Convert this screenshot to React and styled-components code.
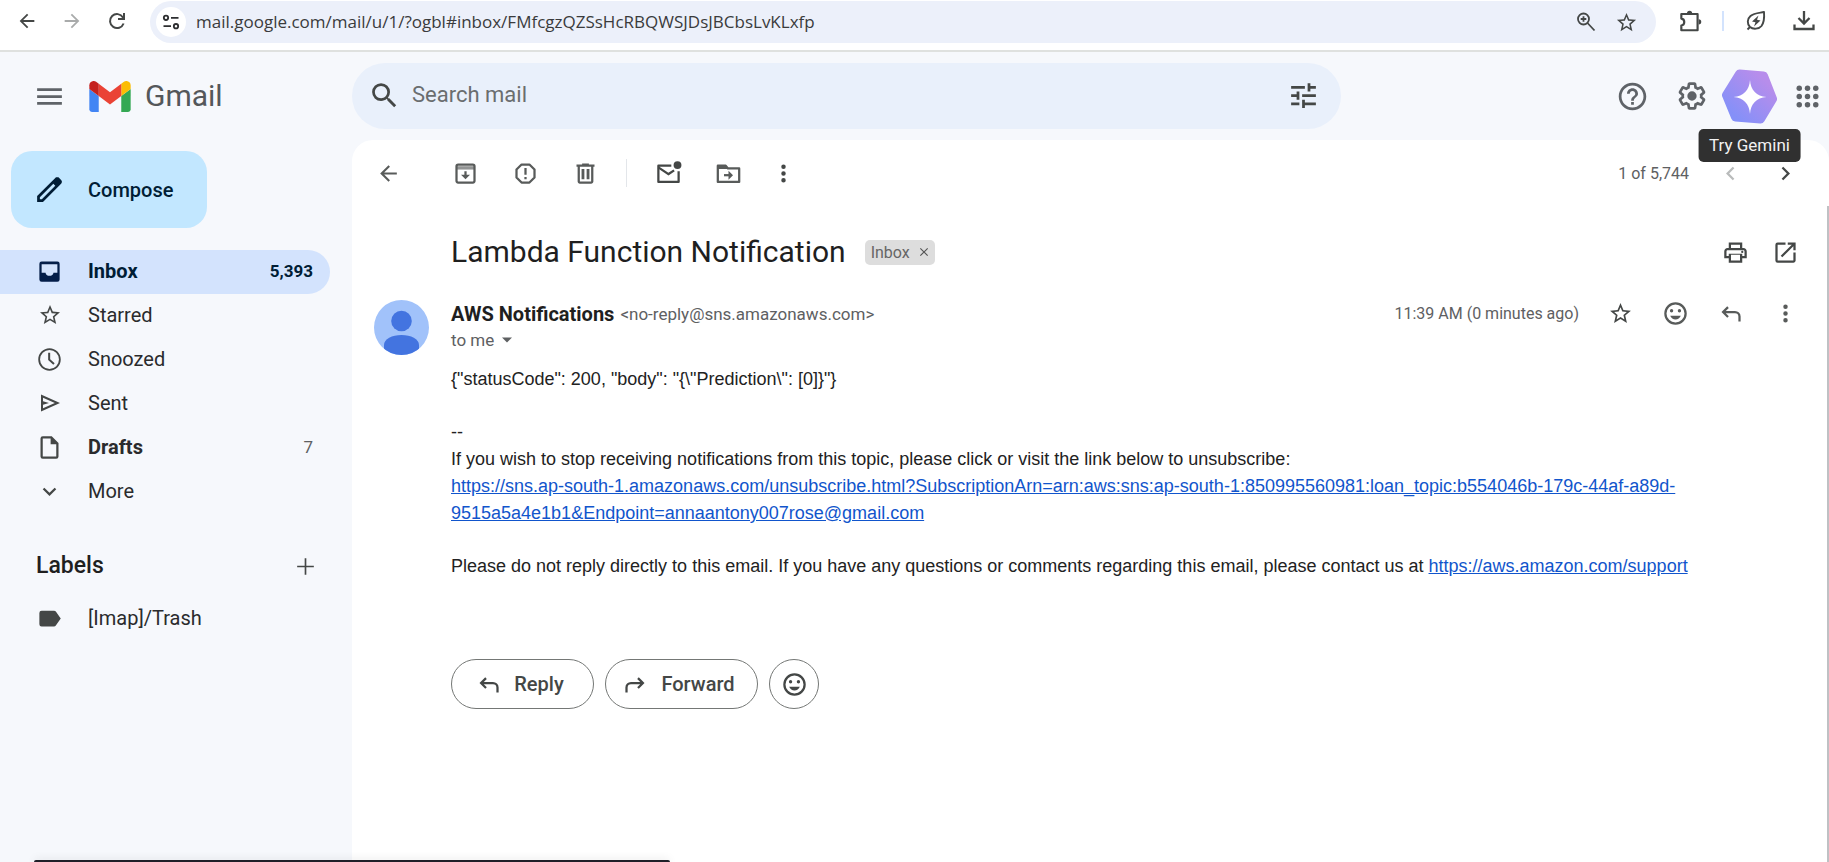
import React from "react";
import styled, { createGlobalStyle } from "styled-components";

const sans = `Roboto, "Liberation Sans", sans-serif`;
const ink = "#444746";
const softInk = "#585b5a";

const GlobalStyle = createGlobalStyle`
  *, *::before, *::after { box-sizing: border-box; }
  html, body, #root { height: 100%; }
  body { margin: 0; background: #f6f8fc; font-family: ${sans}; color: #1f1f1f; }
  button, input { font: inherit; color: inherit; }
  h1, h2, p { margin: 0; font-weight: 400; }
`;

const ICONS = {
  back: "M20 11H7.83l5.59-5.59L12 4l-8 8 8 8 1.41-1.41L7.83 13H20v-2z",
  forwardNav: "M12 4l-1.41 1.41L16.17 11H4v2h12.17l-5.58 5.59L12 20l8-8z",
  menu: "M3 18h18v-2H3v2zm0-5h18v-2H3v2zm0-7v2h18V6H3z",
  search:
    "M15.5 14h-.79l-.28-.27A6.471 6.471 0 0 0 16 9.5 6.5 6.5 0 1 0 9.5 16c1.61 0 3.09-.59 4.23-1.57l.27.28v.79l5 4.99L20.49 19l-4.99-5zm-6 0C7.01 14 5 11.99 5 9.5S7.01 5 9.5 5 14 7.01 14 9.5 11.99 14 9.5 14z",
  tune: "M3 17v2h6v-2H3zM3 5v2h10V5H3zm10 16v-2h8v-2h-8v-2h-2v6h2zM7 9v2H3v2h4v2h2V9H7zm14 4v-2H11v2h10zm-6-4h2V7h4V5h-4V3h-2v6z",
  help: "M11 18h2v-2h-2v2zm1-16C6.48 2 2 6.48 2 12s4.48 10 10 10 10-4.48 10-10S17.52 2 12 2zm0 18c-4.41 0-8-3.59-8-8s3.59-8 8-8 8 3.59 8 8-3.59 8-8 8zm0-14c-2.21 0-4 1.79-4 4h2c0-1.1.9-2 2-2s2 .9 2 2c0 2-3 1.75-3 5h2c0-2.25 3-2.5 3-5 0-2.21-1.79-4-4-4z",
  gear: "M13.85 22.25h-3.7c-.74 0-1.36-.54-1.45-1.27l-.27-1.89c-.27-.14-.53-.29-.79-.46l-1.8.72c-.7.26-1.47-.03-1.81-.65L2.2 15.53c-.35-.66-.2-1.44.36-1.88l1.53-1.19c-.01-.15-.02-.3-.02-.46 0-.15.01-.31.02-.46l-1.52-1.19c-.59-.45-.74-1.26-.37-1.88l1.85-3.19c.34-.62 1.11-.9 1.79-.63l1.81.73c.26-.17.52-.32.78-.46l.27-1.91c.09-.7.71-1.25 1.44-1.25h3.7c.74 0 1.36.54 1.45 1.27l.27 1.89c.27.14.53.29.79.46l1.8-.72c.71-.26 1.48.03 1.82.65l1.84 3.18c.36.66.2 1.44-.36 1.88l-1.52 1.19c.01.15.02.3.02.46s-.01.31-.02.46l1.52 1.19c.56.45.72 1.23.37 1.86l-1.86 3.22c-.34.62-1.11.9-1.8.63l-1.8-.72c-.26.17-.52.32-.78.46l-.27 1.91c-.1.68-.72 1.22-1.46 1.22zm-3.23-2h2.76l.37-2.55.53-.22c.44-.18.88-.44 1.34-.78l.45-.34 2.38.96 1.38-2.4-2.03-1.58.07-.56c.03-.26.06-.51.06-.78s-.03-.53-.06-.78l-.07-.56 2.03-1.58-1.39-2.4-2.39.96-.45-.35c-.42-.32-.87-.58-1.33-.77l-.52-.22-.37-2.55h-2.76l-.37 2.55-.53.21c-.44.19-.88.44-1.34.79l-.45.33-2.38-.95-1.39 2.39 2.03 1.58-.07.56a7 7 0 0 0-.06.79c0 .26.02.53.06.78l.07.56-2.03 1.58 1.38 2.4 2.39-.96.45.35c.43.33.86.58 1.33.77l.53.22.38 2.55zM12 8.5a3.5 3.5 0 1 0 0 7 3.5 3.5 0 0 0 0-7z",
  pencil:
    "M5 19h1.43L16.2 9.23 14.78 7.8 5 17.58V19zm-2 2v-4.25L16.2 3.58c.2-.18.42-.33.66-.43.24-.1.5-.15.77-.15.26 0 .52.05.77.15.25.1.47.25.65.45L20.43 5c.2.18.34.4.43.65.1.25.14.5.14.75 0 .27-.05.52-.14.76-.09.25-.23.47-.43.67L7.25 21H3z",
  inbox:
    "M19 3H5a2 2 0 0 0-2 2v14a2 2 0 0 0 2 2h14a2 2 0 0 0 2-2V5a2 2 0 0 0-2-2zm0 10h-3.5c0 1.5-1.6 2.8-3.5 2.8S8.500 14.500 8.500 13H5V5.500h14z",
  star: "M22 9.24l-7.19-.62L12 2 9.19 8.63 2 9.24l5.46 4.73L5.82 21 12 17.27 18.18 21l-1.63-7.03L22 9.24zM12 15.4l-3.76 2.27 1-4.28-3.32-2.88 4.38-.38L12 6.1l1.71 4.04 4.38.38-3.32 2.88 1 4.28L12 15.4z",
  clock:
    "M11.99 2C6.47 2 2 6.48 2 12s4.47 10 9.99 10C17.52 22 22 17.52 22 12S17.52 2 11.99 2zM12 20.400a8.400 8.400 0 1 1 0-16.800 8.400 8.400 0 0 1 0 16.800zM12.600 6h-1.800v6.500l4.600 4.200 1.200-1.400-4-3.600z",
  send: "M3 20.500V3.500L22 12 3 20.500zm2-3.200L16.850 12 5 6.700v3.600l6 1.700-6 1.700v3.600z",
  file: "M14 2H6a2 2 0 0 0-2 2v16a2 2 0 0 0 2 2h12a2 2 0 0 0 2-2V8l-6-6zM6 20V4h7v5h5v11H6z",
  expand: "M16.590 8.590 12 13.170 7.410 8.590 6 10l6 6 6-6z",
  plus: "M20 12.800h-7.200V20h-1.600v-7.200H4v-1.600h7.200V4h1.600v7.200H20z",
  tag: "M17.630 5.840C17.270 5.330 16.670 5 16 5H5a2 2 0 0 0-2 2v10a2 2 0 0 0 2 2h11c.67 0 1.270-.33 1.630-.84L22 12l-4.370-6.160z",
  trash:
    "M15 4V3H9v1H4v2h1v13c0 1.100.9 2 2 2h10c1.100 0 2-.9 2-2V6h1V4h-5zm2 15H7V6h10v13zM8.500 8h2.500v9H8.500zM13 8h2.500v9H13z",
  more: "M12 8a2 2 0 1 0 0-4 2 2 0 0 0 0 4zm0 2a2 2 0 1 0 0 4 2 2 0 0 0 0-4zm0 6a2 2 0 1 0 0 4 2 2 0 0 0 0-4z",
  left: "M15.410 7.410 14 6l-6 6 6 6 1.410-1.410L10.830 12z",
  right: "M10 6 8.590 7.410 13.170 12l-4.580 4.590L10 18l6-6z",
  print:
    "M19 8h-1V3H6v5H5c-1.660 0-3 1.340-3 3v6h4v4h12v-4h4v-6c0-1.660-1.340-3-3-3zM8 5h8v3H8V5zm8 14H8v-5h8v5zm2-4v-2H6v2H4v-4c0-.55.45-1 1-1h14c.55 0 1 .45 1 1v4h-2zM18 10.500a1 1 0 1 0 0 2 1 1 0 0 0 0-2z",
  open: "M19 19H5V5h7V3H5a2 2 0 0 0-2 2v14a2 2 0 0 0 2 2h14c1.100 0 2-.9 2-2v-7h-2v7zM14 3v2h3.590l-9.830 9.830 1.410 1.410L19 6.410V10h2V3h-7z",
  smile:
    "M12 2a10 10 0 1 0 0 20 10 10 0 0 0 0-20zm0 18a8 8 0 1 1 0-16 8 8 0 0 1 0 16zM15.500 11a1.500 1.500 0 1 0 0-3 1.500 1.500 0 0 0 0 3zm-7 0a1.500 1.500 0 1 0 0-3 1.500 1.500 0 0 0 0 3zM12 17.300c2.100 0 3.900-1.300 4.700-3.300H7.300c.8 2 2.600 3.300 4.700 3.300z",
  reply:
    "M9.100 5.600 4 10.700l5.100 5.100 1.400-1.400-2.700-2.700H16a3 3 0 0 1 3 3V19h2v-4.300a5 5 0 0 0-5-5H7.800l2.700-2.700z",
  forward:
    "M14.900 5.600 20 10.700l-5.100 5.100-1.400-1.400 2.700-2.700H8a3 3 0 0 0-3 3V19H3v-4.300a5 5 0 0 1 5-5h8.200l-2.700-2.700z",
  close: "M19 6.400 17.600 5 12 10.600 6.400 5 5 6.400l5.600 5.600L5 17.600 6.400 19l5.600-5.600 5.600 5.600 1.400-1.400-5.600-5.600z",
  caret: "M6 9l6 6 6-6z",
};

const Svg = styled.svg`
  display: block;
  flex: none;
  width: ${(p) => p.$size}px;
  height: ${(p) => p.$size}px;
  fill: currentColor;
`;

const Icon = ({ name, size = 27 }) => (
  <Svg $size={size} viewBox="0 0 24 24" aria-hidden="true">
    <path fillRule="evenodd" d={ICONS[name]} />
  </Svg>
);

const Line = ({ size = 27, width = 2, children }) => (
  <Svg $size={size} viewBox="0 0 24 24" aria-hidden="true">
    <g fill="none" stroke="currentColor" strokeWidth={width}>
      {children}
    </g>
  </Svg>
);

const IconButton = styled.button`
  display: flex;
  align-items: center;
  justify-content: center;
  flex: none;
  width: ${(p) => p.$w || 48}px;
  height: ${(p) => p.$h || 40}px;
  padding: 0;
  border: 0;
  border-radius: 20px;
  background: none;
  color: ${(p) => p.$color || ink};
  cursor: pointer;
`;

const Page = styled.div`
  position: relative;
  display: flex;
  flex-direction: column;
  min-height: 100%;
  overflow: hidden;
`;

/* Browser bar */
const BrowserBar = styled.header`
  display: flex;
  align-items: center;
  height: 52px;
  padding: 0 9px 8px 5px;
  background: #fff;
  border-bottom: 2px solid #dfe1df;
`;
const NavButtons = styled.div`
  display: flex;
  gap: 1px;
  margin-right: 11px;
`;
const AddressPill = styled.div`
  display: flex;
  align-items: center;
  flex: 1;
  min-width: 0;
  height: 42px;
  margin-top: 2px;
  padding: 0 10px 0 6px;
  border-radius: 21px;
  background: #ecf0fa;
`;
const SiteInfo = styled(IconButton)`
  border-radius: 50%;
  background: #fff;
`;
const AddressInput = styled.input`
  flex: 1;
  min-width: 0;
  margin-left: 10px;
  padding: 0;
  border: 0;
  outline: 0;
  background: none;
  font-family: "Open Sans", "Noto Sans", sans-serif;
  font-size: 17px;
  line-height: 24px;
  color: #3a3b3c;
`;
const BrowserActions = styled.div`
  display: flex;
  align-items: center;
  gap: 12px;
  margin-left: 14px;
`;
const BarDivider = styled.span`
  width: 2px;
  height: 20px;
  background: #d3e3fd;
`;

/* Application header */
const AppHeader = styled.div`
  display: flex;
  align-items: center;
  height: 88px;
`;
const Brand = styled.div`
  display: flex;
  align-items: center;
  flex: none;
  width: 352px;
  padding-left: 25px;
`;
const Logo = styled.svg`
  width: 42px;
  height: 31px;
  margin-left: 16px;
`;
const BrandName = styled.span`
  margin-left: 14px;
  font-size: 30px;
  line-height: 36px;
  color: #54575a;
`;
const SearchBar = styled.form`
  display: flex;
  align-items: center;
  flex: 1;
  max-width: 989px;
  height: 66px;
  padding: 0 14px 2px 8px;
  border-radius: 33px;
  background: #e9f0fb;
`;
const SearchInput = styled.input`
  flex: 1;
  min-width: 0;
  margin-left: 4px;
  padding: 0;
  border: 0;
  outline: 0;
  background: none;
  font-size: 22px;
  line-height: 28px;
  &::placeholder {
    color: #6a6d6f;
    opacity: 1;
  }
`;
const HeaderActions = styled.div`
  display: flex;
  align-items: center;
  margin-left: auto;
`;
const AppsButton = styled(IconButton)`
  padding-left: 8px;
`;
const GeminiSpot = styled.div`
  position: relative;
`;
const Tooltip = styled.span`
  position: absolute;
  top: 60px;
  left: 50%;
  z-index: 2;
  transform: translateX(-50%);
  padding: 0 11px;
  border-radius: 5px;
  background: #303030;
  color: #f2f2f2;
  font-size: 17px;
  line-height: 33px;
  white-space: nowrap;
`;

/* Body */
const Body = styled.div`
  display: flex;
  flex: 1;
`;
const Sidebar = styled.nav`
  flex: none;
  width: 352px;
  padding-top: 11px;
`;
const Compose = styled.button`
  display: flex;
  align-items: center;
  gap: 22px;
  width: 196px;
  height: 77px;
  margin: 0 0 22px 11px;
  padding: 0 0 0 22px;
  border: 0;
  border-radius: 21px;
  background: #c2e7ff;
  color: #001d35;
  font-size: 20px;
  font-weight: 500;
  cursor: pointer;
`;
const NavItem = styled.a`
  display: flex;
  align-items: center;
  gap: 25px;
  width: 330px;
  height: 44px;
  padding: 0 17px 2px 36px;
  border-radius: 0 22px 22px 0;
  background: ${(p) => (p.$active ? "#d3e3fd" : "none")};
  color: ${(p) => (p.$active ? "#001d35" : "#2a2b2d")};
  font-size: 20px;
  font-weight: ${(p) => (p.$bold ? 700 : 400)};
  text-decoration: none;
`;
const NavIcon = styled.span`
  display: flex;
  justify-content: center;
  width: 27px;
  color: ${(p) => (p.$active ? "#041e49" : ink)};
`;
const NavCount = styled.span`
  margin-left: auto;
  font-size: 17px;
  font-weight: ${(p) => (p.$active ? 700 : 400)};
  color: ${(p) => (p.$active ? "#001d35" : "#5e6062")};
`;
const LabelsHeader = styled.div`
  display: flex;
  align-items: center;
  justify-content: space-between;
  width: 330px;
  height: 44px;
  margin: 30px 0 9px;
  padding: 0 5px 0 36px;
`;
const LabelsTitle = styled.h2`
  font-size: 23px;
  line-height: 28px;
  font-weight: 500;
`;

const Card = styled.main`
  flex: 1;
  min-width: 0;
  border-radius: 21px 21px 0 0;
  background: #fff;
`;
const Toolbar = styled.div`
  display: flex;
  align-items: center;
  gap: 12px;
  height: 66px;
  padding: 0 20px 0 12px;
`;
const ToolGroup = styled.div`
  display: flex;
  align-items: center;
  gap: 12px;
  margin-left: 17px;
`;
const ToolDivider = styled.span`
  width: 1px;
  height: 28px;
  margin: 0 5px;
  background: #e3e6ea;
`;
const Pager = styled.div`
  display: flex;
  align-items: center;
  gap: 7px;
  margin-left: auto;
`;
const PagerText = styled.span`
  margin-right: 10px;
  font-size: 16px;
  color: #5e6062;
`;
const Scroller = styled.div`
  min-height: calc(100% - 66px);
  padding: 26px 24px 40px 22px;
  border-right: 2px solid #bfc1c4;
`;
const SubjectRow = styled.div`
  display: flex;
  align-items: center;
  height: 40px;
  margin-bottom: 28px;
  padding-left: 77px;
`;
const Subject = styled.h1`
  font-size: 30px;
  line-height: 40px;
`;
const Chip = styled.span`
  display: flex;
  align-items: center;
  gap: 6px;
  height: 25px;
  margin-left: 19px;
  padding: 0 3px 0 6px;
  border-radius: 5px;
  background: #ddd;
  color: #666;
  font-size: 16px;
`;
const ChipClose = styled(IconButton)`
  color: #555;
`;
const SubjectActions = styled.div`
  display: flex;
  gap: 14px;
  margin-left: auto;
`;
const MessageHead = styled.div`
  display: flex;
  align-items: flex-start;
`;
const Avatar = styled.svg`
  flex: none;
  width: 55px;
  height: 55px;
  margin-right: 22px;
`;
const SenderBlock = styled.div`
  flex: 1;
  min-width: 0;
`;
const SenderLine = styled.div`
  display: flex;
  align-items: center;
  height: 27px;
`;
const SenderName = styled.span`
  font-size: 20px;
  font-weight: 700;
`;
const SenderMail = styled.span`
  margin-left: 6px;
  font-size: 17px;
  color: #5e6062;
`;
const MessageMeta = styled.div`
  display: flex;
  align-items: center;
  gap: 19px;
  margin-left: auto;
`;
const MessageDate = styled.span`
  margin-right: 4px;
  font-size: 16px;
  color: #5e6062;
`;
const Recipient = styled.button`
  display: flex;
  align-items: center;
  gap: 3px;
  height: 28px;
  padding: 0 0 2px;
  border: 0;
  background: none;
  font-size: 17px;
  color: #5e6062;
`;
const MessageBody = styled.div`
  display: flex;
  flex-direction: column;
  gap: 26px;
  margin: 11px 0 79px 77px;
  font-family: "Liberation Sans", Arial, sans-serif;
  font-size: 18px;
  line-height: 27px;
  color: #222;
`;
const BodyLink = styled.a`
  color: #1155cc;
  text-decoration: underline;
`;
const ReplyRow = styled.div`
  display: flex;
  gap: 11px;
  margin-left: 77px;
`;
const ReplyButton = styled.button`
  display: flex;
  align-items: center;
  justify-content: center;
  gap: 12px;
  width: ${(p) => p.$w}px;
  height: 50px;
  padding: ${(p) => (p.$labelled ? "0 6px 0 0" : "0")};
  border: 1px solid #747775;
  border-radius: 25px;
  background: none;
  color: ${ink};
  font-size: 20px;
  font-weight: 500;
`;
const StatusStrip = styled.div`
  position: absolute;
  left: 34px;
  bottom: 0;
  width: 636px;
  height: 2px;
  border-radius: 4px 4px 0 0;
  background: #1f1f28;
  box-shadow: 0 0 8px rgba(0, 0, 0, 0.2);
`;

const NAV = [
  { label: "Inbox", icon: "inbox", count: "5,393", active: true, bold: true },
  { label: "Starred", icon: "star", size: 24 },
  { label: "Snoozed", icon: "clock" },
  { label: "Sent", icon: "send", size: 24 },
  { label: "Drafts", icon: "file", count: "7", bold: true },
  { label: "More", icon: "expand" },
];

const NavRow = ({ label, icon, size, count, active, bold }) => (
  <NavItem href="#" $active={active} $bold={bold}>
    <NavIcon $active={active}>
      <Icon name={icon} size={size} />
    </NavIcon>
    <span>{label}</span>
    {count && <NavCount $active={active}>{count}</NavCount>}
  </NavItem>
);

const Browser = () => (
  <BrowserBar>
    <NavButtons>
      <IconButton $w={44} aria-label="Back"><Icon name="back" size={22} /></IconButton>
      <IconButton $w={44} $color="#a9abab" aria-label="Forward"><Icon name="forwardNav" size={22} /></IconButton>
      <IconButton $w={44} aria-label="Reload">
        <Line size={24}>
          <path d="M18.600 14.500A7 7 0 1 1 18 8.400l1 1.500M19 4v6h-6" />
        </Line>
      </IconButton>
    </NavButtons>
    <AddressPill>
      <SiteInfo $w={30} $h={30} $color="#2d2e30" aria-label="Site information">
        <Line size={20} width={2.200}>
          <circle cx="6" cy="7" r="2.600" />
          <path d="M12 7h9M3 17h9" />
          <circle cx="18" cy="17" r="2.600" />
        </Line>
      </SiteInfo>
      <AddressInput
        aria-label="Address"
        defaultValue="mail.google.com/mail/u/1/?ogbl#inbox/FMfcgzQZSsHcRBQWSJDsJBCbsLvKLxfp"
      />
      <IconButton $w={40} aria-label="Zoom">
        <Line size={24} width={1.800}>
          <circle cx="9.500" cy="9" r="5.500" />
          <path d="M13.500 13l7 7.500M9.500 6.200v5.600M6.700 9h5.600" />
        </Line>
      </IconButton>
      <IconButton $w={40} aria-label="Bookmark"><Icon name="star" size={23} /></IconButton>
    </AddressPill>
    <BrowserActions>
      <IconButton $w={40} aria-label="Extensions">
        <Line size={26}>
          <path strokeLinejoin="round" d="M4 5.500h15v15H4v-4.300c3.600-.4 3.600-6 0-6.400z" />
          <path fill="currentColor" stroke="none" d="M9.200 5a2.400 2.400 0 0 1 4.800 0zM20 10.400a2.400 2.400 0 0 1 0 4.800z" />
        </Line>
      </IconButton>
      <BarDivider />
      <IconButton $w={40} aria-label="Energy saver">
        <Line size={24} width={1.900}>
          <path strokeLinejoin="round" d="M3.500 20.500 6 18c-3-3-3-8 .5-11S15 4 20 3c.5 6 0 10.500-2.500 14-2.500 3.200-8.500 3.600-11.500 1" />
          <path fill="currentColor" stroke="none" d="M14.500 6.500 8 12.500l3.500.8-1.500 4.200 6.500-6-3.500-.8z" />
        </Line>
      </IconButton>
      <IconButton $w={32} aria-label="Downloads">
        <Line size={24} width={2.300}>
          <path d="M12 2v12M6.500 9l5.500 5.500L17.500 9M2.500 15.500v4.500h19v-4.500" />
        </Line>
      </IconButton>
    </BrowserActions>
  </BrowserBar>
);

const Header = () => (
  <AppHeader>
    <Brand>
      <IconButton $color="#5f6368" aria-label="Main menu"><Icon name="menu" size={33} /></IconButton>
      <Logo viewBox="52 42 88 66" aria-hidden="true">
        <path fill="#4285f4" d="M58 108h14V74L52 59v43c0 3.320 2.690 6 6 6" />
        <path fill="#34a853" d="M120 108h14c3.320 0 6-2.690 6-6V59l-20 15" />
        <path fill="#fbbc04" d="M120 48v26l20-15v-8c0-7.420-8.470-11.650-14.400-7.200" />
        <path fill="#ea4335" d="M72 74V48l24 18 24-18v26L96 92" />
        <path fill="#c5221f" d="M52 51v8l20 15V48l-5.600-4.200c-5.940-4.450-14.400-.22-14.400 7.200" />
      </Logo>
      <BrandName>Gmail</BrandName>
    </Brand>
    <SearchBar role="search" onSubmit={(e) => e.preventDefault()}>
      <IconButton aria-label="Search"><Icon name="search" size={33} /></IconButton>
      <SearchInput aria-label="Search mail" placeholder="Search mail" />
      <IconButton type="button" aria-label="Search options"><Icon name="tune" size={33} /></IconButton>
    </SearchBar>
    <HeaderActions>
      <IconButton $w={60} $color="#5f6368" aria-label="Support"><Icon name="help" size={33} /></IconButton>
      <IconButton $w={60} $color="#5f6368" aria-label="Settings"><Icon name="gear" size={32} /></IconButton>
      <GeminiSpot>
        <IconButton $w={55} $h={55} aria-describedby="gemini-tip" aria-label="Gemini">
          <Svg $size={55} viewBox="0 0 55 55" aria-hidden="true">
            <defs>
              <linearGradient id="hex" x1="0.150" y1="0.900" x2="0.850" y2="0.150">
                <stop offset="0" stopColor="#8590f8" />
                <stop offset="1" stopColor="#b78deb" />
              </linearGradient>
            </defs>
            <path
              fill="url(#hex)"
              stroke="url(#hex)"
              strokeWidth="9"
              strokeLinejoin="round"
              d="M17.500 5 41.500 7 50.500 30 38.500 50 13.500 48 4.500 26z"
            />
            <path fill="#fff" d="M28 11c.8 10.500 6.500 16 16.500 17-10 1-15.700 6.500-16.500 17-.8-10.500-6.500-16-16.500-17 10-1 15.700-6.500 16.500-17z" />
          </Svg>
        </IconButton>
        <Tooltip id="gemini-tip" role="tooltip">Try Gemini</Tooltip>
      </GeminiSpot>
      <AppsButton $w={52} $color="#5f6368" aria-label="Google apps">
        <Svg $size={33} viewBox="0 0 24 24" aria-hidden="true">
          {[6, 12, 18].map((y) => [6, 12, 18].map((x) => <circle key={`${x}-${y}`} cx={x} cy={y} r="2" />))}
        </Svg>
      </AppsButton>
    </HeaderActions>
  </AppHeader>
);

const MessageToolbar = () => (
  <Toolbar>
    <IconButton $color={softInk} aria-label="Back to Inbox"><Icon name="back" size={25} /></IconButton>
    <ToolGroup>
      <IconButton $color={softInk} aria-label="Archive">
        <Line>
          <rect x="4" y="4" width="16" height="16" rx="1.500" />
          <path d="M4 7h16" strokeWidth="3" opacity="0.650" />
          <path d="M12 10v5" />
          <path d="M8 13h8l-4 4z" fill="currentColor" stroke="none" />
        </Line>
      </IconButton>
      <IconButton $color={softInk} aria-label="Report spam">
        <Line>
          <path strokeLinejoin="round" d="M8.500 4h7L20 8.500v7L15.500 20h-7L4 15.500v-7z" />
          <path d="M12 7v6M12 15v2" />
        </Line>
      </IconButton>
      <IconButton $color={softInk} aria-label="Delete"><Icon name="trash" /></IconButton>
      <ToolDivider />
      <IconButton aria-label="Mark as unread">
        <Line>
          <path strokeLinejoin="round" d="M14.500 5H3v14.500h18V10" />
          <path d="M3 6.500l9 6 5-3.300" />
          <circle cx="20" cy="4.500" r="3.500" fill="currentColor" stroke="none" />
        </Line>
      </IconButton>
      <IconButton $color={softInk} aria-label="Move to">
        <Line>
          <path strokeLinejoin="round" d="M2.500 5h7l2 2.500h10v12h-19z" />
          <path d="M2 4.500h7l3 3.500H2z" fill="currentColor" stroke="none" />
          <path d="M8 13.500h5" />
          <path d="M12 9.500v8l4-4z" fill="currentColor" stroke="none" />
        </Line>
      </IconButton>
      <IconButton $w={38} aria-label="More"><Icon name="more" /></IconButton>
    </ToolGroup>
    <Pager>
      <PagerText>1 of 5,744</PagerText>
      <IconButton $color="#b9bbbb" aria-label="Newer"><Icon name="left" /></IconButton>
      <IconButton aria-label="Older"><Icon name="right" /></IconButton>
    </Pager>
  </Toolbar>
);

const Message = () => (
  <Scroller>
    <SubjectRow>
      <Subject>Lambda Function Notification</Subject>
      <Chip>
        Inbox
        <ChipClose $w={16} $h={25} aria-label="Remove label Inbox"><Icon name="close" size={14} /></ChipClose>
      </Chip>
      <SubjectActions>
        <IconButton $w={36} aria-label="Print"><Icon name="print" /></IconButton>
        <IconButton $w={36} aria-label="Open in new window"><Icon name="open" /></IconButton>
      </SubjectActions>
    </SubjectRow>
    <MessageHead>
      <Avatar viewBox="0 0 55 55" aria-hidden="true">
        <clipPath id="disc"><circle cx="27.500" cy="27.500" r="27.500" /></clipPath>
        <g clipPath="url(#disc)">
          <rect width="55" height="55" fill="#a1c2fa" />
          <circle cx="27.500" cy="21" r="10.300" fill="#4374e0" />
          <path fill="#4374e0" d="M10 55V45c0-6 8-10 17.500-10S45 39 45 45v10z" />
        </g>
      </Avatar>
      <SenderBlock>
        <SenderLine>
          <SenderName>AWS Notifications</SenderName>
          <SenderMail>&lt;no-reply@sns.amazonaws.com&gt;</SenderMail>
          <MessageMeta>
            <MessageDate>11:39 AM (0 minutes ago)</MessageDate>
            <IconButton $w={36} $h={27} aria-label="Star"><Icon name="star" size={25} /></IconButton>
            <IconButton $w={36} $h={27} $color={softInk} aria-label="Add reaction"><Icon name="smile" /></IconButton>
            <IconButton $w={36} $h={27} $color={softInk} aria-label="Reply"><Icon name="reply" /></IconButton>
            <IconButton $w={36} $h={27} $color={softInk} aria-label="More options"><Icon name="more" /></IconButton>
          </MessageMeta>
        </SenderLine>
        <Recipient>
          to me
          <Icon name="caret" size={20} />
        </Recipient>
      </SenderBlock>
    </MessageHead>
    <MessageBody>
      <p>{'{"statusCode": 200, "body": "{\\"Prediction\\": [0]}"}'}</p>
      <p>
        --
        <br />
        If you wish to stop receiving notifications from this topic, please click or visit the link below to unsubscribe:
        <br />
        <BodyLink href="#">
          https://sns.ap-south-1.amazonaws.com/unsubscribe.html?SubscriptionArn=arn:aws:sns:ap-south-1:850995560981:loan_topic:b554046b-179c-44af-a89d-9515a5a4e1b1&amp;Endpoint=annaantony007rose@gmail.com
        </BodyLink>
      </p>
      <p>
        Please do not reply directly to this email. If you have any questions or comments regarding this email, please
        contact us at <BodyLink href="#">https://aws.amazon.com/support</BodyLink>
      </p>
    </MessageBody>
    <ReplyRow>
      <ReplyButton $w={143} $labelled><Icon name="reply" />Reply</ReplyButton>
      <ReplyButton $w={153} $labelled><Icon name="forward" />Forward</ReplyButton>
      <ReplyButton $w={50} aria-label="Add reaction"><Icon name="smile" /></ReplyButton>
    </ReplyRow>
  </Scroller>
);

export default function App() {
  return (
    <Page>
      <GlobalStyle />
      <Browser />
      <Header />
      <Body>
        <Sidebar aria-label="Mailboxes">
          <Compose><Icon name="pencil" size={33} />Compose</Compose>
          {NAV.map((item) => <NavRow key={item.label} {...item} />)}
          <LabelsHeader>
            <LabelsTitle>Labels</LabelsTitle>
            <IconButton $w={40} aria-label="Create new label"><Icon name="plus" size={25} /></IconButton>
          </LabelsHeader>
          <NavRow label="[Imap]/Trash" icon="tag" />
        </Sidebar>
        <Card>
          <MessageToolbar />
          <Message />
        </Card>
      </Body>
      <StatusStrip />
    </Page>
  );
}
